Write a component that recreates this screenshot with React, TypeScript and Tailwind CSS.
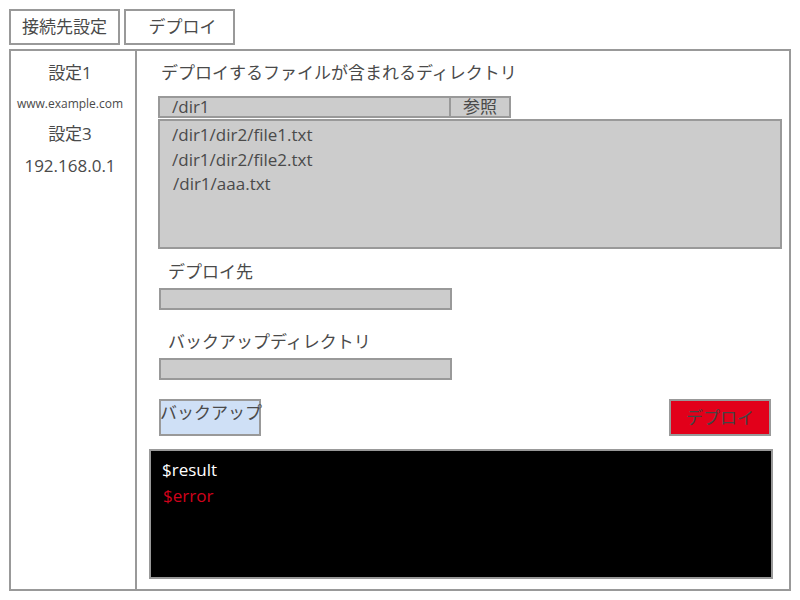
import React from "react";

export default function App() {
  const font = "font-['Open_Sans','Noto_Sans_CJK_JP',sans-serif]";
  return (
    <div className={`w-[800px] h-[600px] bg-white text-[#4a4a4a] ${font}`}>
      <div className="flex gap-[4px] pl-[9px] pt-[9px]">
        <div className="w-[111px] h-[36px] border-2 border-[#999] flex items-center justify-center text-[17px] leading-[24px]">
          接続先設定
        </div>
        <div className="w-[111px] h-[36px] border-2 border-[#999] flex items-center justify-center text-[17px] leading-[24px] pl-[6px]">
          デプロイ
        </div>
      </div>
      <div className="ml-[9px] mt-[4px] w-[782px] h-[542px] border-2 border-[#999] flex">
        <div className="w-[126px] border-r-2 border-[#999] flex flex-col items-center pt-[10px] pr-[6px]">
          <div className="text-[17px] leading-[24px]">設定1</div>
          <div className="text-[12px] leading-[16px] mt-[11px] whitespace-nowrap">www.example.com</div>
          <div className="text-[17px] leading-[24px] mt-[10px]">設定3</div>
          <div className="text-[17px] leading-[24px] mt-[8px]">192.168.0.1</div>
        </div>
        <div className="flex-1 pl-[21px] pt-[10px] flex flex-col items-start">
          <div className="pl-[3px] text-[17px] leading-[24px]">デプロイするファイルが含まれるディレクトリ</div>
          <div className="mt-[11px] flex">
            <div className="w-[293px] h-[22px] border-2 border-[#999] bg-[#ccc] pl-[12px] text-[17px] leading-[18px]">/dir1</div>
            <div className="w-[60px] h-[22px] border-2 border-l-0 border-[#999] bg-[#ccc] text-center text-[17px] leading-[18px]">参照</div>
          </div>
          <div className="mt-[1px] w-[624px] h-[130px] border-2 border-[#999] bg-[#ccc] pl-[12px] pt-[2px] text-[17px] leading-[24.5px]">
            <div>/dir1/dir2/file1.txt</div>
            <div>/dir1/dir2/file2.txt</div>
            <div className="pl-[1px]">/dir1/aaa.txt</div>
          </div>
          <div className="mt-[11px] pl-[10px] text-[17px] leading-[24px]">デプロイ先</div>
          <div className="mt-[4px] ml-[1px] w-[293px] h-[22px] border-2 border-[#999] bg-[#ccc]"></div>
          <div className="mt-[20px] pl-[10px] text-[17px] leading-[24px]">バックアップディレクトリ</div>
          <div className="mt-[4px] ml-[1px] w-[293px] h-[22px] border-2 border-[#999] bg-[#ccc]"></div>
          <div className="mt-[19px] ml-[1px] w-[612px] flex justify-between items-start">
            <div className="w-[102px] h-[37px] border-2 border-[#999] bg-[#cfe0f6] text-[17px] leading-[24px] whitespace-nowrap overflow-visible -indent-[1px]">
              バックアップ
            </div>
            <div className="w-[102px] h-[37px] border-2 border-[#999] bg-[#e2001a] text-[17px] leading-[24px] flex items-center justify-center text-[#444]">
              デプロイ
            </div>
          </div>
          <div className="mt-[13px] -ml-[9px] w-[624px] h-[130px] border-2 border-[#999] bg-black pl-[11px] pt-[7px] text-[17px]">
            <div className="text-white leading-[24px]">$result</div>
            <div className="text-[#d0021b] leading-[28px] pl-[1px]">$error</div>
          </div>
        </div>
      </div>
    </div>
  );
}
